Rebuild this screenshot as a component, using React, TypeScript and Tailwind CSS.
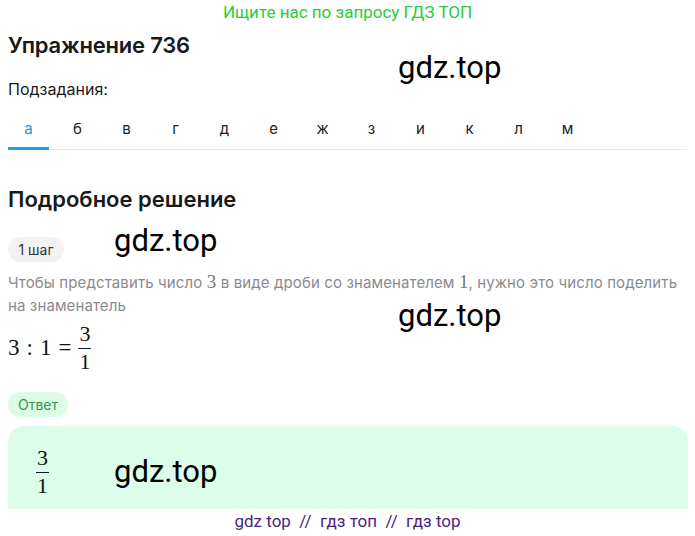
const tabs = ['а', 'б', 'в', 'г', 'д', 'е', 'ж', 'з', 'и', 'к', 'л', 'м'];

const Frac = ({ top, bottom }: { top: string; bottom: string }) => (
  <span className="inline-flex flex-col items-center align-middle mx-[2px] text-[22px]">
    <span className="leading-[24px]">{top}</span>
    <span className="mt-[2px] block h-px w-[13px] bg-gray-900" />
    <span className="leading-[26px]">{bottom}</span>
  </span>
);

const Mark = ({ className }: { className: string }) => (
  <span className={`absolute text-[31px] leading-none text-black font-['Roboto',sans-serif] pointer-events-none ${className}`}>gdz.top</span>
);

export default function App() {
  return (
    <div className="relative w-[695px] h-[536px] overflow-hidden bg-white font-['Inter','Noto_Sans',sans-serif] text-[#1a1a1a]">
      <div className="text-center text-[17px] leading-[24px] text-[#29cc3a] font-['Roboto',sans-serif]">Ищите нас по запросу ГДЗ ТОП</div>

      <div className="px-2">
        <h1 className="mt-[6px] text-[22px] leading-[30px] font-semibold tracking-[-0.2px]">Упражнение 736</h1>
        <div className="mt-[18px] text-[16px] leading-[22px]">Подзадания:</div>

        <div className="mt-[10px] flex gap-2 border-b border-gray-200">
          {tabs.map((t, i) => (
            <div
              key={t}
              className={
                i === 0
                  ? 'w-[41px] -mb-px pt-[9px] pb-[8px] text-center text-[15px] leading-[20px] text-[#2d8fd5] border-b-[3px] border-[#1ea5e0]'
                  : 'w-[41px] -mb-px pt-[9px] pb-[11px] text-center text-[15px] leading-[20px] text-[#222]'
              }
            >
              {t}
            </div>
          ))}
        </div>

        <h2 className="mt-[34px] text-[22px] leading-[30px] font-semibold tracking-[0px]">Подробное решение</h2>

        <div className="mt-[23px] inline-flex h-[25px] w-[56px] items-center justify-center rounded-full bg-[#f2f2f5] text-[14px] text-[#333]">1 шаг</div>

        <p className="mt-[9px] text-[15px] leading-[23px] tracking-[0.12px] text-[#8a8a8e]">
          Чтобы представить число <span className="font-['Liberation_Serif',serif] text-[19px] leading-[16px] text-[#777]">3</span> в виде дроби со знаменателем{' '}
          <span className="font-['Liberation_Serif',serif] text-[19px] leading-[16px] text-[#777]">1</span>, нужно это число поделить на знаменатель
        </p>

        <div className="mt-[5px] flex items-center font-['Liberation_Serif',serif] text-[23px] text-[#111]">
          <span>3</span>
          <span className="ml-[7px]">:</span>
          <span className="ml-[7px]">1</span>
          <span className="ml-[7px]">=</span>
          <span className="ml-[5px]">
            <Frac top="3" bottom="1" />
          </span>
        </div>

        <div className="mt-[17px] inline-flex h-[25px] w-[60px] items-center justify-center rounded-full bg-[#dcfce8] text-[14px] text-[#2a9a4a]">Ответ</div>

        <div className="mt-[9px] h-[90px] w-[680px] rounded-t-2xl bg-[#dbfde9] pl-[26px] pt-[20px] font-['Liberation_Serif',serif] text-[#111]">
          <Frac top="3" bottom="1" />
        </div>
      </div>

      <div className="absolute left-0 right-0 top-[509px] h-[27px] bg-white text-center text-[17px] leading-[25px] text-[#4a1f7e] font-['Roboto',sans-serif]">
        gdz top&nbsp; //&nbsp; гдз топ&nbsp; //&nbsp; гдз top
      </div>

      <Mark className="left-[398px] top-[52px]" />
      <Mark className="left-[114px] top-[225px]" />
      <Mark className="left-[398px] top-[300px]" />
      <Mark className="left-[114px] top-[456px]" />
    </div>
  );
}
